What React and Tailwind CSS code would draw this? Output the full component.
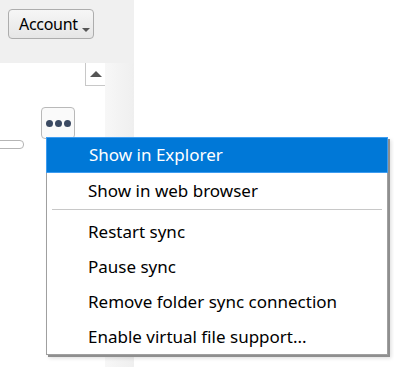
export default function App() {
  const items = [
    { label: 'Show in Explorer', active: true },
    { label: 'Show in web browser' },
    { sep: true },
    { label: 'Restart sync' },
    { label: 'Pause sync' },
    { label: 'Remove folder sync connection' },
    { label: 'Enable virtual file support...' },
  ];

  return (
    <div
      className="relative w-[394px] h-[367px] bg-white overflow-hidden"
      style={{ fontFamily: '"Noto Sans", "Open Sans", sans-serif' }}
    >
      <div className="flex h-full">
        {/* left column */}
        <div className="w-[134px] h-full bg-[#f0f0f0] flex flex-col">
          <div className="h-[63px] pt-[9px] pl-[8px]">
            <button className="relative h-[30px] w-[86px] rounded-[4px] border border-[#adadad] bg-gradient-to-b from-[#f6f6f6] to-[#e6e6e6] text-[16px] text-black text-left pl-[10px] leading-[28px] tracking-[-0.3px]">
              Account
              <span className="absolute right-[3px] bottom-[6px] w-0 h-0 border-l-[4px] border-r-[4px] border-t-[4px] border-l-transparent border-r-transparent border-t-[#555]"></span>
            </button>
          </div>
          <div className="flex flex-1">
            <div className="w-[105px] bg-white relative">
              <div className="absolute right-0 top-0 w-[20px] h-[23px] border-l border-b border-[#c8c8c8] bg-white flex items-center justify-center">
                <span className="w-0 h-0 border-l-[6px] border-r-[6px] border-b-[6px] border-l-transparent border-r-transparent border-b-[#555]"></span>
              </div>
              <div className="absolute left-[-10px] top-[77px] w-[34px] h-[9px] rounded-[4px] border border-[#b5b5b5] bg-white"></div>
              <div className="absolute left-[41px] top-[44px] w-[34px] h-[32px] rounded-[4px] border border-[#b9b9b9] bg-[#fafafa] flex items-center justify-center gap-[2px]">
                <span className="w-[7px] h-[7px] rounded-full bg-[#3b4a62]"></span>
                <span className="w-[7px] h-[7px] rounded-full bg-[#3b4a62]"></span>
                <span className="w-[7px] h-[7px] rounded-full bg-[#3b4a62]"></span>
              </div>
            </div>
            <div className="flex-1 bg-gradient-to-r from-[#f7f7f7] to-[#efefef]"></div>
          </div>
        </div>
        <div className="flex-1 bg-white"></div>
      </div>

      {/* context menu */}
      <div className="absolute left-[46px] top-[137px] w-[342px] bg-white border border-[#a0a0a0] shadow-[2px_2px_0_#8f8f8f,3px_3px_4px_rgba(0,0,0,0.15)]">
        {items.map((it, i) =>
          it.sep ? (
            <div key={i} className="h-[6px] pt-[1px] px-[5px]">
              <div className="h-px w-full bg-[#c8c8c8]"></div>
            </div>
          ) : (
            <div
              key={i}
              className={
                'flex items-center text-[17px] ' +
                (it.active
                  ? 'h-[36px] bg-[#0078d7] text-white border border-[#3d9cf0] -mt-px -mx-px pl-[42px]'
                  : 'h-[35px] text-black pl-[41px]')
              }
            >
              {it.label}
            </div>
          )
        )}
      </div>
    </div>
  );
}
